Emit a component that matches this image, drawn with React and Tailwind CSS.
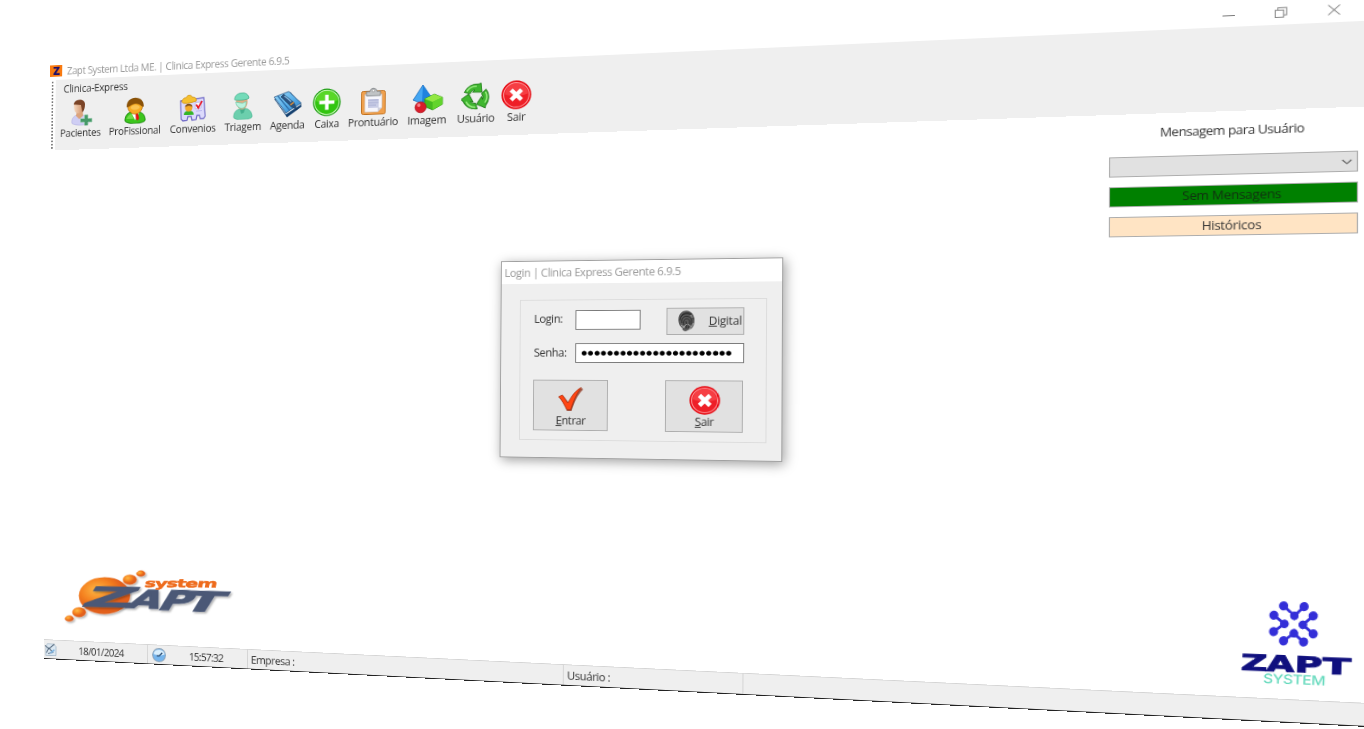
import React from "react";

const WIDTH = 1366;
const HEIGHT = 728;

// Screen corners of the tilted window: top-left, top-right, bottom-right, bottom-left.
const CORNERS = [
  [50.5, 61.4],
  [1364, -2],
  [1364, 726.9],
  [44, 658.9],
];

function perspective(width, height, [[x0, y0], [x1, y1], [x2, y2], [x3, y3]]) {
  const dx1 = x1 - x2;
  const dx2 = x3 - x2;
  const dy1 = y1 - y2;
  const dy2 = y3 - y2;
  const sx = x0 - x1 + x2 - x3;
  const sy = y0 - y1 + y2 - y3;
  const det = dx1 * dy2 - dx2 * dy1;
  const g = (sx * dy2 - dx2 * sy) / det;
  const h = (dx1 * sy - sx * dy1) / det;
  const m = [
    (x1 - x0 + g * x1) / width, (y1 - y0 + g * y1) / width, 0, g / width,
    (x3 - x0 + h * x3) / height, (y3 - y0 + h * y3) / height, 0, h / height,
    0, 0, 1, 0,
    x0, y0, 0, 1,
  ];
  return `matrix3d(${m.join(",")})`;
}

function Pacientes() {
  return (
    <svg viewBox="0 0 32 32" className="size-8">
      <defs>
        <linearGradient id="pskin" x1="0" x2="1"><stop offset="0" stopColor="#f7d9c0" /><stop offset="1" stopColor="#cf8f66" /></linearGradient>
      </defs>
      <path d="M5 29c-1-6 2-9 6-10l7 0c5 1 8 4 8 10-3 3-18 3-21 0z" fill="#cfcef4" stroke="#b1b0e2" strokeWidth=".7" />
      <path d="M11 14l-1 6 4 4 5-4-1-7z" fill="#dba37c" />
      <path d="M7 6c0-3 11-5 12 0 1 6-1 10-6 11-4 0-6-4-6-11z" fill="url(#pskin)" />
      <path d="M7 5C9-1 21-1 21 6c0 5-1 8-3 10l-1-4-1-5-9-1z" fill="#7a4326" />
      <path d="M20.500 19h4.500v4.500h5v4.500h-5V32.500h-4.500V28h-5v-4.500h5z" fill="#469a68" stroke="#a5cfb7" strokeWidth=".8" />
    </svg>
  );
}

function Doctor({ className = "size-8" }) {
  return (
    <svg viewBox="0 0 32 32" className={className}>
      <path d="M4 28c0-6 3-9 7-10h10c5 1 8 5 8 10 0 5-25 5-25 0z" fill="#3cc51d" stroke="#16830a" strokeWidth="1" />
      <path d="M6 26c1-3 3-5 6-6l3 6z" fill="#86e85c" opacity=".7" />
      <path d="M12 19l4.500 9 5-9z" fill="#fff" />
      <path d="M17 20h3l1.500 6-2 2.500-2-2.500z" fill="#e31414" />
      <circle cx="16.500" cy="11.500" r="9" fill="#f6ab22" stroke="#b36a08" strokeWidth=".8" />
      <path d="M6 12C5-3 28-3 27 12c-3 0-5-4-10-4S10 12 6 12z" fill="#8a5208" />
      <ellipse cx="16.500" cy="12.500" rx="5.500" ry="3" fill="#ffd774" opacity=".6" />
    </svg>
  );
}

function Convenios() {
  return (
    <svg viewBox="0 0 32 32" className="h-8 w-[36px]">
      <path d="M1 7l28-3 2 22-2 3h-4l-1-4h-3l-1 5-5 .5-1-4.500h-4l-1 4.500-5 .5-2-2z" fill="#dcdafc" stroke="#6f69c6" strokeWidth="1.300" />
      <path d="M4 5c1-2 3-1 4-2 2-4 6-3 7 0 3 0 6 1 5 5-5 1-9 3-15 2-3-1-3-3-1-5z" fill="#f5c02f" stroke="#c98a0c" strokeWidth=".8" />
      <path d="M5 24c0-4 3-5 6-5s6 1 6 5z" fill="#35b52a" />
      <circle cx="11" cy="15.500" r="4.500" fill="#f4a928" />
      <path d="M6.500 14.500c0-5 9-5 9 0-3-2-6-2-9 0z" fill="#80501a" />
      <path d="M19 9.500l7-.5v7l-7 1z" fill="#fff" stroke="#a9a6dc" strokeWidth=".7" />
      <path d="M20 12l2.500 4 4.500-8" fill="none" stroke="#e81424" strokeWidth="2" />
      <path d="M20 20l7-.5" stroke="#b6b3ee" />
    </svg>
  );
}

function Triagem() {
  return (
    <svg viewBox="0 0 32 32" className="size-8">
      <path d="M5 29c0-6 3-9 8-10h6c5 1 8 5 8 10 0 4-22 4-22 0z" fill="#6ccfad" stroke="#49b693" strokeWidth=".8" />
      <path d="M12 18h7l-2 6-3 1z" fill="#45b08f" />
      <path d="M8 8l13-1c2 8-2 13-6 13S7 15 8 8z" fill="#e0ab83" />
      <path d="M7.500 11l8 1.500 4.500-2c0 6-2 8-5.500 8s-6.500-3-7-7.500z" fill="#b9f2de" stroke="#61c5a3" strokeWidth=".7" />
      <path d="M6 8C6-2 23-2 23 7c-1 2-15 3-17 1z" fill="#74dbb9" stroke="#41ab89" strokeWidth=".8" />
    </svg>
  );
}

function Agenda() {
  return (
    <svg viewBox="0 0 34 32" className="h-8 w-[34px]">
      <defs>
        <linearGradient id="book" x1="0" y1="0" x2="1" y2="1"><stop offset="0" stopColor="#9ad6f7" /><stop offset=".5" stopColor="#5db2ea" /><stop offset="1" stopColor="#2a7cc4" /></linearGradient>
      </defs>
      <path d="M1 9l13 19 2 3.500 17-12-.5-4z" fill="#16406f" />
      <path d="M2 10l13 18L32.500 17 20 2z" fill="#f4f8fc" stroke="#235584" strokeWidth=".7" />
      <path d="M1 7l17-6 14.500 14L15 26z" fill="url(#book)" stroke="#1d4d7d" strokeWidth=".8" />
      <path d="M5 5.500l14.500 18" stroke="#2c6da8" strokeWidth="1.300" />
      <path d="M12 4l12 10 4 9-7-4L9 7z" fill="#2b5380" stroke="#14304f" strokeWidth=".6" />
      <path d="M13 6l8 7" stroke="#8fc4ea" strokeWidth="1.300" />
      <path d="M20 17l4-3" stroke="#d08a3c" strokeWidth="1.600" />
    </svg>
  );
}

function Caixa() {
  return (
    <svg viewBox="0 0 32 32" className="size-[33px]">
      <circle cx="16" cy="16" r="15.500" fill="#129808" />
      <circle cx="16" cy="16" r="13.700" fill="#32c510" stroke="#c5f7b4" strokeWidth="1.100" />
      <path d="M4 14a12 11 0 0124 0c-8 4-16 4-24 0z" fill="#6de034" opacity=".65" />
      <path d="M16 7.500v17M7.500 16h17" stroke="#fff" strokeWidth="4" />
    </svg>
  );
}

function Prontuario() {
  return (
    <svg viewBox="0 0 32 32" className="size-8">
      <rect x="2.500" y="4.500" width="27" height="27" rx="2" fill="#f0a04c" stroke="#c0701e" />
      <path d="M6 8h20v16l-5 5H6z" fill="#f6f6fc" stroke="#c9a98b" strokeWidth=".7" />
      <path d="M21 29v-5h5z" fill="#cfd0dc" />
      <path d="M10 14h12v10H10z" fill="#c9cde6" />
      <path d="M10 15h12M10 18h12M10 21h9" stroke="#a8aed2" strokeWidth="1.200" />
      <path d="M8 5h4c0-5 8-5 8 0h4v5H8z" fill="#c0c3c5" stroke="#74787c" strokeWidth=".8" />
      <circle cx="16" cy="4" r="1.700" fill="#f5f5f5" stroke="#666" strokeWidth=".5" />
    </svg>
  );
}

function Imagem() {
  return (
    <svg viewBox="0 0 36 34" className="h-[34px] w-9">
      <path d="M13 1L2 18l10 4 11-6z" fill="#43a6f2" stroke="#1766b8" strokeWidth=".8" />
      <path d="M13 1l-1 21 11-6z" fill="#1f82de" />
      <path d="M15 17l11-5 9 4v8l-11 6-9-4z" fill="#45bb1f" stroke="#218c0d" strokeWidth=".8" />
      <path d="M15 17l11-5 9 4-11 5z" fill="#92e743" />
      <path d="M24 21l11-5v8l-11 6z" fill="#62d42c" />
      <circle cx="10.500" cy="26.500" r="6.300" fill="#d91c2a" stroke="#a50d19" strokeWidth=".7" />
      <circle cx="8.500" cy="24" r="2" fill="#f78189" />
    </svg>
  );
}

function Usuario() {
  return (
    <svg viewBox="0 0 32 32" className="size-8">
      <g strokeLinejoin="round">
        {[0, 120, 240].map((angle) => (
          <g key={angle} transform={`rotate(${angle} 16 16)`}>
            <path d="M3.300 10.500A14.500 14.500 0 0119 1.500l3-1 1 10.500-10.500-.500 2.500-2.500c-2.500 0-4 1.500-5 4z" fill="#3fb62f" stroke="#1f7a18" strokeWidth=".9" />
            <path d="M6 9.500c2.500-4 6-6 11-5.500" stroke="#9cec83" strokeWidth="1.600" fill="none" />
          </g>
        ))}
      </g>
    </svg>
  );
}

function Sair({ className = "size-[33px]" }) {
  return (
    <svg viewBox="0 0 32 32" className={className}>
      <circle cx="16" cy="16" r="15.700" fill="#e60b13" />
      <circle cx="16" cy="16" r="13.500" fill="#ee1f27" stroke="#ff9396" strokeWidth="1.100" />
      <path d="M4 15a12 12 0 0124 0c-8 3-16 3-24 0z" fill="#fb5357" opacity=".6" />
      <path d="M10.500 10.500l11 11M21.500 10.500l-11 11" stroke="#fff" strokeWidth="4.600" />
    </svg>
  );
}

function Check() {
  return (
    <svg viewBox="0 0 28 28" className="h-7 w-[29px]">
      <path d="M2 12l4-2 6 8C15 11 19 4 26 1l1 2c-6 6-9 14-12 24h-5C8 21 5 16 2 12z" fill="#8b2a12" opacity=".75" />
      <path d="M1 11l4-2 6 9C15 10 19 4 25 .5c-5 7-8 15-11 25H10C7 20 5 15 1 11z" fill="#ff4614" stroke="#a52a0a" strokeWidth=".7" />
    </svg>
  );
}

function Fingerprint() {
  return (
    <svg viewBox="0 0 18 24" className="h-6 w-[18px]">
      <path d="M5 1c7-3 12 3 12 10 0 4-1 7-3 9l-6 3c-4 0-3-4-6-6C-1 11 0 4 5 1z" fill="#5a5a5a" />
      <g fill="none" stroke="#262626" strokeWidth=".9">
        <path d="M2 11c0-9 13-10 14-1M4 14C2 5 13 4 14 11c0 4-1 6-2 8M6 16C4 9 11 7 12 12c0 3-1 5-2 8M8 20c1-3 1-5 0-8M3 7c2-5 8-5 11-3" />
      </g>
      <path d="M3 16l4 3M4 20l5-5M11 22l5-8M13 5l2 3M10 15l4 3" stroke="#bdbdbd" strokeWidth=".8" />
    </svg>
  );
}

function Restore() {
  return (
    <svg viewBox="0 0 12 12" className="size-[11px]" fill="none" stroke="#888">
      <path d="M.5 3.500h8v8h-8zM3 3V.8h8.300V9H9" />
    </svg>
  );
}

const tools = [
  { label: "Pacientes", Icon: Pacientes, width: "w-[61px]" },
  { label: "ProFissional", Icon: Doctor, width: "w-[74px]" },
  { label: "Convenios", Icon: Convenios, width: "w-[68px]" },
  { label: "Triagem", Icon: Triagem, width: "w-[52px]" },
  { label: "Agenda", Icon: Agenda, width: "w-[53px]" },
  { label: "Caixa", Icon: Caixa, width: "w-[39px]" },
  { label: "Prontuário", Icon: Prontuario, width: "w-[67px]" },
  { label: "Imagem", Icon: Imagem, width: "w-[55px]" },
  { label: "Usuário", Icon: Usuario, width: "w-[54px]" },
  { label: "Sair", Icon: Sair, width: "w-[35px]" },
];

function TitleBar() {
  return (
    <header className="flex h-[23px] items-center bg-white pr-[3px] text-[#999]">
      <span className="flex h-[14px] w-[15px] items-center justify-center bg-[#f97a10] text-[14px] leading-none font-black text-[#20106a]">Z</span>
      <h1 className="ml-[6px] flex-1 pt-[2px] tracking-[-0.46px]">Zapt System Ltda ME. | Clinica Express Gerente 6.9.5</h1>
      <span className="flex w-[46px] justify-center"><span className="h-px w-[11px] bg-[#777]" /></span>
      <span className="flex w-[46px] justify-center pb-[2px]"><Restore /></span>
      <span className="flex w-[46px] justify-center pb-[2px]">
        <svg viewBox="0 0 12 12" className="size-[11px]" stroke="#777" strokeWidth="1"><path d="M.5.5l11 11M11.500.5l-11 11" /></svg>
      </span>
    </header>
  );
}

function Toolbar() {
  return (
    <nav className="flex h-[86px] bg-[#efefef]">
      <div className="flex w-[7px] bg-white pl-[2px]">
        <span className="my-[2px] border-l-2 border-dotted border-[#777]" />
      </div>
      <div className="flex-1 pl-px">
        <div className="h-[23px] pl-[9px] leading-[24px] tracking-[-0.25px]">Clinica-Express</div>
        <div className="flex">
          {tools.map(({ label, Icon, width }) => (
            <button key={label} className={`flex flex-none flex-col items-center ${width}`}>
              <span className="flex h-[35px] items-center justify-center"><Icon /></span>
              <span className="text-[12px] leading-[16px] tracking-[-0.3px] whitespace-nowrap">{label}</span>
            </button>
          ))}
        </div>
      </div>
    </nav>
  );
}

function MessagePanel() {
  return (
    <aside className="mr-[5px] flex w-[220px] flex-col gap-[10px] pt-[10px]">
      <h2 className="mb-[6px] text-center leading-[19px]">Mensagem para Usuário</h2>
      <div className="-mt-px flex h-[21px] items-center justify-end border border-[#adadad] bg-[#e1e1e1] pr-[4px]">
        <svg viewBox="0 0 10 6" className="h-[6px] w-[9px]" fill="none" stroke="#666" strokeWidth="1.300"><path d="M.7.8L5 5 9.300.8" /></svg>
      </div>
      <button className="h-[21px] border border-[#adadad] bg-[#008000] pt-px leading-none tracking-[-0.3px] text-[#103010]">Sem Mensagens</button>
      <button className="h-[21px] border border-[#adadad] bg-[#ffe4c4] pt-px leading-none tracking-[-0.3px]">Históricos</button>
    </aside>
  );
}

function ZaptSystemLogo() {
  return (
    <svg width="212" height="90" className="overflow-visible">
      <defs>
        <radialGradient id="sun" cx=".35" cy=".35"><stop offset="0" stopColor="#fdb945" /><stop offset=".6" stopColor="#f58220" /><stop offset="1" stopColor="#e2601c" /></radialGradient>
        <filter id="logoShadow" x="-20%" y="-20%" width="150%" height="150%"><feDropShadow dx="1.500" dy="1.500" stdDeviation="1" floodOpacity=".3" /></filter>
      </defs>
      <g transform="matrix(1.222 -.05 0 1.2 -73.7 -666)">
        <g fill="url(#sun)" filter="url(#logoShadow)">
          <ellipse cx="105" cy="595.500" rx="26" ry="18.500" />
          <ellipse cx="130.500" cy="579.500" rx="7" ry="5" />
          <ellipse cx="141.500" cy="573.500" rx="4.500" ry="3" />
          <ellipse cx="79.500" cy="612" rx="7" ry="5" />
          <ellipse cx="69.500" cy="618.500" rx="4.500" ry="3" />
        </g>
        <g fontFamily="DejaVu Sans" fontWeight="bold">
          <g fill="#4b5876" stroke="#4b5876" strokeWidth="1.100" filter="url(#logoShadow)">
            <text transform="translate(81 606) rotate(1) skewX(-32)" fontSize="27" textLength="49" lengthAdjust="spacingAndGlyphs">Z</text>
            <text transform="translate(127 607.500) rotate(1.500) skewX(-30)" fontSize="25" textLength="31" lengthAdjust="spacingAndGlyphs">A</text>
            <text transform="translate(157 609.500) rotate(1.500) skewX(-30)" fontSize="27" textLength="31" lengthAdjust="spacingAndGlyphs">P</text>
            <text transform="translate(181 610.500) rotate(1.500) skewX(-30)" fontSize="27" textLength="36" lengthAdjust="spacingAndGlyphs">T</text>
          </g>
          <text transform="translate(145 587) rotate(.5) skewX(-10)" fontSize="11" textLength="71" lengthAdjust="spacingAndGlyphs" fill="#ee6b1c" stroke="#ee6b1c" strokeWidth=".5">system</text>
        </g>
      </g>
    </svg>
  );
}

const spokes = [
  [[1294.500, 615], [1283.700, 605]],
  [[1294.500, 615], [1304.300, 606]],
  [[1284.500, 623], [1274, 614.300]],
  [[1284.500, 623], [1273.700, 630.700]],
  [[1303, 624], [1313.300, 615.300]],
  [[1303, 624], [1313.300, 633]],
  [[1294, 632.500], [1283.700, 639.900]],
  [[1294, 632.500], [1303.700, 641]],
];

const brandLetters = [
  { letter: "Z", x: 1240.500, y: 669, width: 26 },
  { letter: "A", x: 1266.500, y: 670, width: 27 },
  { letter: "P", x: 1294.500, y: 671, width: 27 },
  { letter: "T", x: 1322.500, y: 672.500, width: 27 },
];

function ZaptBrand() {
  return (
    <svg width="110" height="95" className="overflow-visible">
      <g transform="matrix(.865 -.0413 0 1.009 -1063.3 -546.9)">
        <g stroke="#342fd8" strokeWidth="2.800" fill="#342fd8">
          {spokes.map(([[ax, ay], [bx, by]], i) => (
            <g key={i}>
              <path d={`M${ax} ${ay}L${bx} ${by}`} />
              <circle cx={bx} cy={by} r="3.200" />
              <circle cx={ax} cy={ay} r="2.800" />
            </g>
          ))}
        </g>
        <g fontFamily="DejaVu Sans" fontWeight="bold" fontSize="22" fill="#10107e" stroke="#10107e" strokeWidth=".9">
          {brandLetters.map(({ letter, x, y, width }) => (
            <text key={letter} transform={`translate(${x} ${y}) rotate(2)`} textLength={width} lengthAdjust="spacingAndGlyphs">{letter}</text>
          ))}
        </g>
        <text transform="translate(1263 682) rotate(2)" fontFamily="Inter" fontWeight="500" fontSize="13" textLength="62" lengthAdjust="spacingAndGlyphs" fill="#63d9bc">SYSTEM</text>
      </g>
    </svg>
  );
}

function LoginDialog() {
  return (
    <section className="absolute top-[143px] left-[533px] flex h-[221.5px] w-[296px] flex-col border border-[#a0a0a0] bg-[#efefef] shadow-[2px_3px_12px_rgba(0,0,0,0.38)]">
      <h2 className="h-[25px] bg-white pl-[3px] leading-[25px] text-[#999]">Login | Clinica Express Gerente 6.9.5</h2>
      <form className="mt-[18px] ml-[19.5px] h-[158px] w-[259px] border border-[#dcdcdc] pt-[8px] pl-[14px]">
        <div className="flex h-[31px] items-center">
          <label className="mt-[-5px] w-[45px] pl-px">Login:</label>
          <span className="mt-[-3px] h-[22px] w-[69px] border border-[#7a7a7a] bg-white" />
          <button type="button" className="ml-[27px] flex h-[30px] w-[80px] items-center justify-between border border-[#adadad] bg-[#e1e1e1] pr-px pl-[11px]">
            <Fingerprint />
            <span className="pt-px tracking-[-0.2px]"><u>D</u>igital</span>
          </button>
        </div>
        <div className="mt-[9px] flex h-[22px] items-center">
          <label className="w-[45px] pl-px">Senha:</label>
          <span className="flex h-[22px] w-[176px] items-center overflow-hidden border border-[#7a7a7a] bg-white pl-[6px] font-['DejaVu_Sans'] text-[7px] tracking-[0.75px] whitespace-nowrap text-black">
            ●●●●●●●●●●●●●●●●●●●●●●●
          </span>
        </div>
        <div className="mt-[19px] ml-[0.5px] flex gap-[60px]">
          <button type="button" className="flex h-[57px] w-[80px] flex-col items-center border border-[#adadad] bg-[#e1e1e1] pt-[3px] pl-px">
            <span className="flex h-[35px] items-center"><Check /></span>
            <span className="leading-[14px]"><u>E</u>ntrar</span>
          </button>
          <button type="button" className="flex h-[57px] w-[80px] flex-col items-center border border-[#adadad] bg-[#e1e1e1] pt-[3px] pl-px">
            <span className="flex h-[35px] items-center"><Sair className="size-8" /></span>
            <span className="leading-[14px]"><u>S</u>air</span>
          </button>
        </div>
      </form>
    </section>
  );
}

function StatusBar() {
  return (
    <footer className="flex h-[24px] items-center border-t border-b border-t-[#d4d4d4] border-b-[#222] bg-[#efefef]">
      <div className="flex h-full w-[128.5px] items-center border-r border-[#d4d4d4]">
        <svg viewBox="0 0 16 16" className="h-[17px] w-[16px]">
          <path d="M4 1h8l3 3v11H2V6z" fill="#dce8f2" stroke="#9db2c4" strokeWidth=".8" />
          <path d="M1 3l5 4 7-6M3 12l3-6 5 5-6 2" fill="none" stroke="#55697d" strokeWidth="1.100" />
          <path d="M8 12l5-4" stroke="#7cb2df" strokeWidth="2" />
        </svg>
        <span className="ml-[27px] pt-[2px] tracking-[-0.75px]">18/01/2024</span>
      </div>
      <div className="flex h-full w-[120px] items-center border-r border-[#d4d4d4] pl-[5px]">
        <svg viewBox="0 0 18 18" className="size-[17px]">
          <circle cx="9" cy="9" r="8.300" fill="#76b5ed" stroke="#8fa4b8" strokeWidth="1.200" />
          <path d="M2 8a7 6 0 0114 0c-5 2-9 2-14 0z" fill="#d9eefc" />
          <path d="M6 10l3 0 4-4" stroke="#24476d" strokeWidth="1.600" fill="none" />
        </svg>
        <span className="ml-[28px] pt-[2px] tracking-[-0.8px]">15:57:32</span>
      </div>
      <div className="flex h-full w-[355px] items-center border-r border-[#d4d4d4] pt-[2px] pl-[4px]">Empresa :</div>
      <div className="flex h-full w-[187px] items-center border-r border-[#d4d4d4] pt-[2px] pl-[4px]">Usuário :</div>
    </footer>
  );
}

export default function App() {
  return (
    <div className="h-screen w-screen overflow-hidden bg-white">
      <div
        className="flex h-[728px] w-[1366px] origin-top-left flex-col font-['Open_Sans','Noto_Sans',sans-serif] text-[12px] tracking-[-0.46px] text-[#333]"
        style={{ transform: perspective(WIDTH, HEIGHT, CORNERS) }}
      >
        <TitleBar />
        <Toolbar />
        <main className="relative flex flex-1 flex-col justify-between bg-white">
          <div className="flex justify-end"><MessagePanel /></div>
          <div className="flex items-end justify-between pr-[6px] pb-[9px] pl-[20px]">
            <ZaptSystemLogo />
            <ZaptBrand />
          </div>
          <LoginDialog />
        </main>
        <StatusBar />
      </div>
    </div>
  );
}
